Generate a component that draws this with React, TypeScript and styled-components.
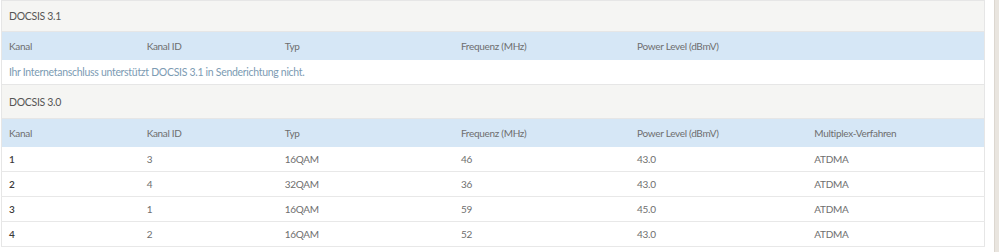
import React from "react";
import styled, { createGlobalStyle } from "styled-components";

const GlobalStyle = createGlobalStyle`
  html, body {
    margin: 0;
    padding: 0;
    background: #ffffff;
  }
  body {
    font-family: "Lato", "Open Sans", sans-serif;
  }
`;

const Page = styled.div`
  display: flex;
  width: 999px;
  height: 252px;
  overflow: hidden;
  background: #ffffff;
`;

const Content = styled.div`
  flex: 0 0 985px;
  padding-left: 1px;
  box-sizing: border-box;
`;

const Gutter = styled.div`
  flex: 0 0 9px;
`;

const ScrollTrack = styled.div`
  flex: 0 0 5px;
  background: #e9e5df;
  border-left: 1px solid #dcd7d0;
  box-sizing: border-box;
`;

const Table = styled.table`
  width: 100%;
  border-collapse: collapse;
  table-layout: fixed;
  font-size: 10px;
  letter-spacing: -0.3px;
  color: #555555;
  border-left: 1px solid #e6e6e6;
  border-right: 1px solid #e6e6e6;
`;

const SectionRow = styled.tr<{ $h: number }>`
  height: ${({ $h }) => $h}px;
  background: #f5f5f3;
  border-top: 1px solid #e6e6e6;
  border-bottom: 1px solid #e6e6e6;
  & > td {
    padding: 0 0 0 7px;
    color: #555555;
    font-size: 10.5px;
  }
`;

const HeadRow = styled.tr`
  height: 28px;
  background: #d6e7f6;
  & > th {
    text-align: left;
    font-weight: 400;
    padding: 0 0 0 7px;
    color: #6e6e6e;
  }
`;

const NoteRow = styled.tr`
  height: 25px;
  background: #ffffff;
  & > td {
    padding: 0 0 0 7px;
    color: #7c9bb3;
    font-size: 10.5px;
  }
`;

const DataRow = styled.tr`
  height: 25px;
  border-bottom: 1px solid #e8e8e8;
  & > td {
    padding: 0 0 0 7px;
    color: #6e6e6e;
  }
  & > td:first-child {
    color: #3a3a3a;
    font-weight: 600;
  }
`;

const Col = styled.col<{ $w: number }>`
  width: ${({ $w }) => $w}px;
`;

const widths = [138, 138, 176, 176, 177, 177];

const rows = [
  ["1", "3", "16QAM", "46", "43.0", "ATDMA"],
  ["2", "4", "32QAM", "36", "43.0", "ATDMA"],
  ["3", "1", "16QAM", "59", "45.0", "ATDMA"],
  ["4", "2", "16QAM", "52", "43.0", "ATDMA"],
];

const Cols = () => (
  <colgroup>
    {widths.map((w, i) => (
      <Col key={i} $w={w} />
    ))}
  </colgroup>
);

export default function App() {
  return (
    <>
      <GlobalStyle />
      <Page>
        <Content>
          <Table>
            <Cols />
            <tbody>
              <SectionRow $h={31}>
                <td colSpan={6}>DOCSIS 3.1</td>
              </SectionRow>
              <HeadRow>
                <th>Kanal</th>
                <th>Kanal ID</th>
                <th>Typ</th>
                <th>Frequenz (MHz)</th>
                <th>Power Level (dBmV)</th>
                <th></th>
              </HeadRow>
              <NoteRow>
                <td colSpan={6}>
                  Ihr Internetanschluss unterstützt DOCSIS 3.1 in Senderichtung nicht.
                </td>
              </NoteRow>
              <SectionRow $h={34}>
                <td colSpan={6}>DOCSIS 3.0</td>
              </SectionRow>
              <HeadRow>
                <th>Kanal</th>
                <th>Kanal ID</th>
                <th>Typ</th>
                <th>Frequenz (MHz)</th>
                <th>Power Level (dBmV)</th>
                <th>Multiplex-Verfahren</th>
              </HeadRow>
              {rows.map((r) => (
                <DataRow key={r[0]}>
                  {r.map((c, i) => (
                    <td key={i}>{c}</td>
                  ))}
                </DataRow>
              ))}
            </tbody>
          </Table>
        </Content>
        <Gutter />
        <ScrollTrack />
      </Page>
    </>
  );
}
